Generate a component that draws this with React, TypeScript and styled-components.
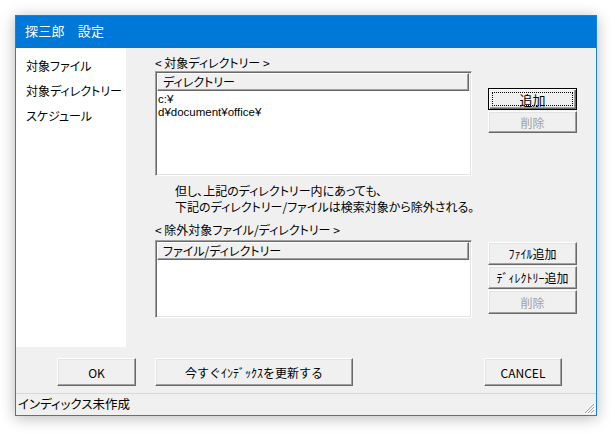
import React from "react";
import styled, { createGlobalStyle, css } from "styled-components";

const GlobalStyle = createGlobalStyle`
  html, body {
    margin: 0;
    padding: 0;
    background: #ffffff;
  }
  body {
    font-family: "Noto Sans CJK JP", "Liberation Sans", sans-serif;
    font-size: 12px;
    color: #000;
    font-feature-settings: "palt";
  }
`;

const Page = styled.div`
  padding: 15px 0 0 15px;
  width: 615px;
  height: 434px;
  box-sizing: border-box;
`;

const Window = styled.div`
  width: 582px;
  height: 401px;
  box-sizing: border-box;
  border: 1px solid #1883d7;
  box-shadow: 0 2px 14px rgba(0, 0, 0, 0.28);
  display: flex;
  flex-direction: column;
  background: #f0f0f0;
`;

const TitleBar = styled.div`
  height: 32px;
  flex: none;
  background: #0078d7;
  color: #fff;
  font-size: 13px;
  display: flex;
  align-items: center;
  padding: 0 0 3px 9px;
  box-sizing: border-box;
  letter-spacing: 0.2px;
`;

const Main = styled.div`
  height: 299px;
  flex: none;
  display: flex;
`;

const Sidebar = styled.div`
  width: 110px;
  background: #fff;
  padding: 11px 0 0 10px;
  box-sizing: border-box;
  display: flex;
  flex-direction: column;
  gap: 11px;
`;

const NavItem = styled.div`
  line-height: 14px;
  font-size: 12px;
`;

const Content = styled.div`
  flex: 1;
  padding: 8px 0 0 29px;
  display: flex;
  flex-direction: column;
`;

const GroupLabel = styled.div<{ $gap: number }>`
  line-height: 14px;
  margin-bottom: ${(p) => p.$gap}px;
`;

const Row = styled.div`
  display: flex;
  gap: 16px;
`;

const ListBox = styled.div<{ $h: number }>`
  width: 317px;
  height: ${(p) => p.$h}px;
  box-sizing: border-box;
  background: #fff;
  border-style: solid;
  border-width: 1px;
  border-color: #a0a0a0 #fff #fff #a0a0a0;
  box-shadow: inset 1px 1px 0 #696969, inset -1px -1px 0 #e3e3e3;
  padding: 1px;
  display: flex;
  flex-direction: column;
`;

const HeaderRow = styled.div`
  display: flex;
  height: 18px;
  flex: none;
  background: #f0f0f0;
`;

const HeaderCell = styled.div`
  width: 312px;
  box-sizing: border-box;
  border-style: solid;
  border-width: 1px;
  border-color: #fff #696969 #696969 #fff;
  box-shadow: inset -1px -1px 0 #a0a0a0;
  padding-left: 5px;
  line-height: 15px;
`;

const ListItems = styled.div`
  padding: 2px 0 0 1px;
  display: flex;
  flex-direction: column;
`;

const ListItem = styled.div`
  font-family: "Liberation Sans", "Noto Sans CJK JP", sans-serif;
  line-height: 13px;
  font-size: 11.5px;
`;

const ButtonCol = styled.div<{ $top: number }>`
  display: flex;
  flex-direction: column;
  gap: 1px;
  padding-top: ${(p) => p.$top}px;
`;

const Button = styled.button<{ $w?: number; $h?: number; $default?: boolean }>`
  position: relative;
  width: ${(p) => p.$w ?? 89}px;
  height: ${(p) => p.$h ?? 23}px;
  box-sizing: border-box;
  font-family: "Noto Sans CJK JP", "Liberation Sans", sans-serif;
  font-size: 12px;
  font-feature-settings: normal;
  color: #000;
  background: #f0f0f0;
  border-style: solid;
  border-width: 1px;
  border-color: #fff #696969 #696969 #fff;
  box-shadow: inset -1px -1px 0 #a0a0a0, inset 1px 1px 0 #e3e3e3;
  padding: 0;
  display: flex;
  align-items: center;
  justify-content: center;
  &:disabled {
    color: #a0a0a0;
  }
  ${(p) =>
    p.$default &&
    css`
      outline: 1px solid #000;
      outline-offset: -1px;
      border-color: #000;
      box-shadow: inset 1px 1px 0 #fff, inset -1px -1px 0 #696969, inset -2px -2px 0 #a0a0a0;
      font-size: 13px;
      &::after {
        content: "";
        position: absolute;
        inset: 3px;
        border: 1px dotted #000;
      }
    `}
`;

const Note = styled.div`
  padding: 7px 0 0 20px;
  line-height: 16px;
  margin-bottom: 8px;
`;

const ButtonRow = styled.div`
  height: 28px;
  margin-top: 11px;
  flex: none;
  display: flex;
  padding-left: 41px;
`;

const Spacer = styled.div<{ $w: number }>`
  width: ${(p) => p.$w}px;
  flex: none;
`;

const StatusBar = styled.div`
  position: relative;
  margin-top: 7px;
  height: 22px;
  flex: none;
  border-top: 1px solid #d7d7d7;
  box-sizing: border-box;
  padding-left: 2px;
  line-height: 20px;
  font-size: 12.5px;
`;

const Grip = styled.svg`
  position: absolute;
  right: 1px;
  bottom: 1px;
`;

export default function App() {
  return (
    <Page>
      <GlobalStyle />
      <Window>
        <TitleBar>探三郎　設定</TitleBar>
        <Main>
          <Sidebar>
            <NavItem>対象ファイル</NavItem>
            <NavItem>対象ディレクトリー</NavItem>
            <NavItem>スケジュール</NavItem>
          </Sidebar>
          <Content>
            <GroupLabel $gap={1}>&lt; 対象ディレクトリー &gt;</GroupLabel>
            <Row>
              <ListBox $h={105}>
                <HeaderRow>
                  <HeaderCell>ディレクトリー</HeaderCell>
                </HeaderRow>
                <ListItems>
                  <ListItem>c:¥</ListItem>
                  <ListItem>d¥document¥office¥</ListItem>
                </ListItems>
              </ListBox>
              <ButtonCol $top={17}>
                <Button $h={22} $default>追加</Button>
                <Button $h={22} disabled>削除</Button>
              </ButtonCol>
            </Row>
            <Note>
              但し、上記のディレクトリー内にあっても、
              <br />
              下記のディレクトリー/ファイルは検索対象から除外される。
            </Note>
            <GroupLabel $gap={3}>&lt; 除外対象ファイル/ディレクトリー &gt;</GroupLabel>
            <Row>
              <ListBox $h={78}>
                <HeaderRow>
                  <HeaderCell>ファイル/ディレクトリー</HeaderCell>
                </HeaderRow>
              </ListBox>
              <ButtonCol $top={2}>
                <Button>ﾌｧｲﾙ追加</Button>
                <Button>ﾃﾞｨﾚｸﾄﾘｰ追加</Button>
                <Button $h={24} disabled>削除</Button>
              </ButtonCol>
            </Row>
          </Content>
        </Main>
        <ButtonRow>
          <Button $w={79} $h={28}>OK</Button>
          <Spacer $w={19} />
          <Button $w={198} $h={28}>今すぐｲﾝﾃﾞｯｸｽを更新する</Button>
          <Spacer $w={131} />
          <Button $w={78} $h={28}>CANCEL</Button>
        </ButtonRow>
        <StatusBar>
          インディックス未作成
          <Grip width="12" height="12" viewBox="0 0 12 12">
            <path d="M11 2 L2 11 M11 5 L5 11 M11 8 L8 11" stroke="#a0a0a0" strokeWidth="1" />
            <path d="M12 3 L3 12 M12 6 L6 12 M12 9 L9 12" stroke="#ffffff" strokeWidth="1" />
          </Grip>
        </StatusBar>
      </Window>
    </Page>
  );
}
